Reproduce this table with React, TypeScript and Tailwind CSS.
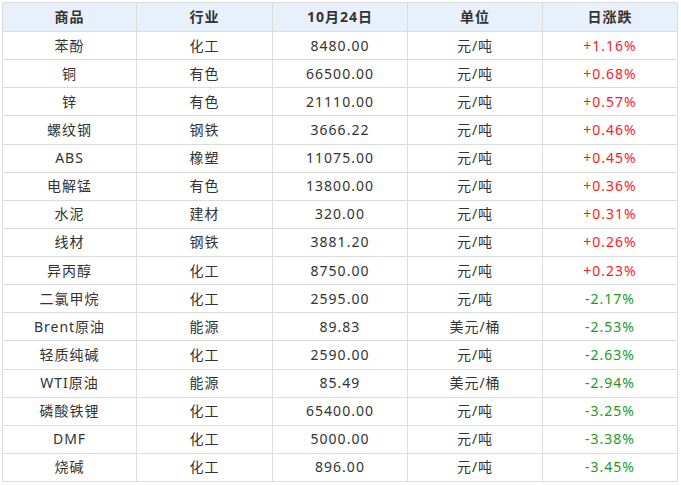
import React from "react";

const rows: [string, string, string, string, string][] = [
  ["苯酚", "化工", "8480.00", "元/吨", "+1.16%"],
  ["铜", "有色", "66500.00", "元/吨", "+0.68%"],
  ["锌", "有色", "21110.00", "元/吨", "+0.57%"],
  ["螺纹钢", "钢铁", "3666.22", "元/吨", "+0.46%"],
  ["ABS", "橡塑", "11075.00", "元/吨", "+0.45%"],
  ["电解锰", "有色", "13800.00", "元/吨", "+0.36%"],
  ["水泥", "建材", "320.00", "元/吨", "+0.31%"],
  ["线材", "钢铁", "3881.20", "元/吨", "+0.26%"],
  ["异丙醇", "化工", "8750.00", "元/吨", "+0.23%"],
  ["二氯甲烷", "化工", "2595.00", "元/吨", "-2.17%"],
  ["Brent原油", "能源", "89.83", "美元/桶", "-2.53%"],
  ["轻质纯碱", "化工", "2590.00", "元/吨", "-2.63%"],
  ["WTI原油", "能源", "85.49", "美元/桶", "-2.94%"],
  ["磷酸铁锂", "化工", "65400.00", "元/吨", "-3.25%"],
  ["DMF", "化工", "5000.00", "元/吨", "-3.38%"],
  ["烧碱", "化工", "896.00", "元/吨", "-3.45%"],
];

const headers = ["商品", "行业", "10月24日", "单位", "日涨跌"];

export default function App() {
  return (
    <div
      className="w-[681px] h-[485px] bg-white pt-[2px] pl-[2px]"
      style={{ fontFamily: '"Noto Sans", "Noto Sans CJK SC", sans-serif' }}
    >
      <table className="w-[675px] h-[480px] border-collapse table-fixed text-[14px] tracking-[1px] text-[#333]">
        <colgroup>
          <col className="w-[134px]" />
          <col className="w-[136px]" />
          <col className="w-[135px]" />
          <col className="w-[135px]" />
          <col className="w-[135px]" />
        </colgroup>
        <thead>
          <tr className="h-[29px] bg-[#e8f0fc]">
            {headers.map((h) => (
              <th
                key={h}
                className="border border-[#dcdcdc] p-0 font-bold text-center leading-none text-[#333]"
              >
                {h}
              </th>
            ))}
          </tr>
        </thead>
        <tbody>
          {rows.map((r) => {
            const up = r[4].startsWith("+");
            return (
              <tr key={r[0]} className="h-[28px]">
                {r.map((c, i) => (
                  <td
                    key={i}
                    className={
                      "border border-[#dcdcdc] p-0 text-center leading-none " +
                      (i === 4 ? (up ? "text-[#ff1a1a]" : "text-[#1e9a1e]") : "")
                    }
                  >
                    {c}
                  </td>
                ))}
              </tr>
            );
          })}
        </tbody>
      </table>
    </div>
  );
}
